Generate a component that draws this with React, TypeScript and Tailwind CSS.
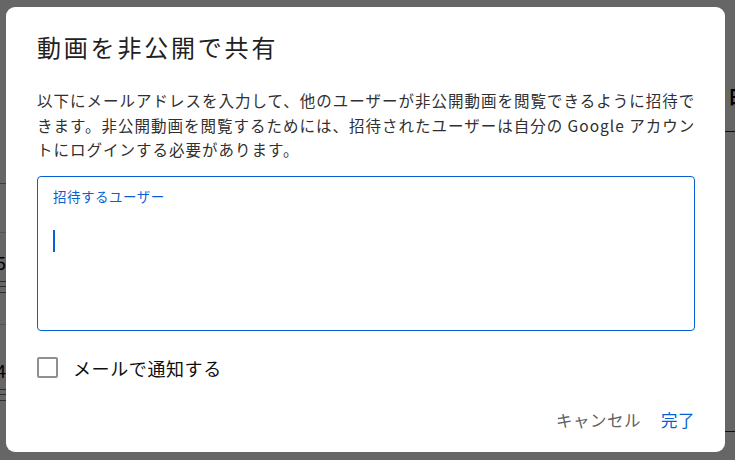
import React from "react";

export default function App() {
  return (
    <div
      className="relative w-[735px] h-[460px] overflow-hidden bg-white"
      style={{ fontFamily: '"Noto Sans CJK JP", "Noto Sans", sans-serif' }}
    >
      {/* background page (dimmed) */}
      <div className="flex h-full w-full">
        <div className="w-[6px] flex flex-col pt-[170px]">
          <div className="h-[14px] w-[6px] border-b border-gray-400"></div>
          <div className="h-[49px] border-b border-gray-300"></div>
          <div className="text-[18px] leading-[26px] text-black -ml-[4px] mt-[16px]">5</div>
          <div className="text-[14px] leading-[22px] text-gray-500 -ml-[4px]">日</div>
          <div className="h-[28px] border-b border-gray-300"></div>
          <div className="text-[18px] leading-[26px] text-black -ml-[4px] mt-[32px]">4</div>
          <div className="text-[14px] leading-[22px] text-gray-500 -ml-[4px]">日</div>
        </div>
        <div className="flex-1"></div>
        <div className="w-[10px] flex flex-col pt-[82px]">
          <div className="text-[18px] font-bold leading-[28px] text-black ml-[3px]">日</div>
          <div className="h-[22px] border-b border-gray-800"></div>
          <div className="h-[300px] border-b border-gray-800"></div>
        </div>
      </div>
      <div className="absolute inset-0 bg-black/60"></div>

      {/* dialog */}
      <div className="absolute left-[6px] top-[7px] w-[719px] h-[445px] rounded-[9px] bg-white pl-[31px] pr-[30px] pt-[25px] flex flex-col">
        <div className="text-[24px] leading-[30px] text-[#212121] tracking-[2.8px]">
          動画を非公開で共有
        </div>
        <div className="mt-[26px] text-[15.5px] leading-[24.5px] text-[#303030] tracking-[1px] whitespace-nowrap -mr-[20px]">
          以下にメールアドレスを入力して、他のユーザーが非公開動画を閲覧できるように招待で
          <br />
          きます。非公開動画を閲覧するためには、招待されたユーザーは自分の Google アカウン
          <br />
          トにログインする必要があります。
        </div>
        <div className="mt-[14px] h-[155px] rounded-[4px] border border-[#065fd4] px-[15px] pt-[9px]">
          <div className="text-[13.5px] leading-[20px] text-[#065fd4] tracking-[0.5px]">招待するユーザー</div>
          <div className="mt-[24px] h-[22px] w-[2px] bg-[#065fd4]"></div>
        </div>
        <div className="mt-[25px] flex items-center gap-[15px]">
          <div className="h-[21px] w-[21px] rounded-[2px] border-2 border-[#909090]"></div>
          <div className="text-[18px] leading-[24px] text-[#0f0f0f] tracking-[0.6px]">メールで通知する</div>
        </div>
        <div className="mt-[28px] flex justify-end items-center gap-[20px] text-[16.5px] leading-[24px] tracking-[0.5px]">
          <span className="text-[#606060]">キャンセル</span>
          <span className="text-[#065fd4]">完了</span>
        </div>
      </div>
    </div>
  );
}
